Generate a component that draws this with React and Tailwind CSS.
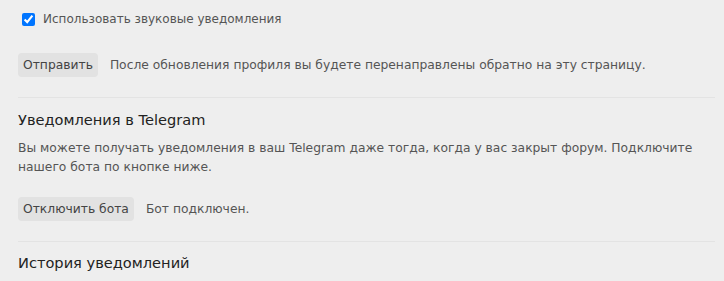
export default function App() {
  return (
    <div className="min-h-[281px] bg-[#eeeeee] pl-[18px] pr-[9px] pt-[9px] font-['DejaVu_Sans',sans-serif] text-[12.3px] text-[#555]">
      <label className="flex h-[20px] items-center text-[12px]">
        <input type="checkbox" defaultChecked className="ml-[4px] mr-[8px] h-[13px] w-[13px] accent-[#0075ff]" />
        <span>Использовать звуковые уведомления</span>
      </label>

      <div className="mt-[24px] flex items-center gap-[12px]">
        <button className="h-[24px] rounded-[4px] bg-[#e2e2e2] px-[5px] text-[#444]">Отправить</button>
        <span>После обновления профиля вы будете перенаправлены обратно на эту страницу.</span>
      </div>

      <hr className="mt-[20px] border-[#e3e3e3]" />

      <h3 className="mt-[12px] text-[14.6px] leading-[20px] text-[#222]">Уведомления в Telegram</h3>
      <p className="mt-[9px] leading-[19px]">
        Вы можете получать уведомления в ваш Telegram даже тогда, когда у вас закрыт форум. Подключите нашего бота по кнопке ниже.
      </p>

      <div className="mt-[20px] flex items-center gap-[12px]">
        <button className="h-[24px] rounded-[4px] bg-[#e2e2e2] px-[5px] text-[#444]">Отключить бота</button>
        <span>Бот подключен.</span>
      </div>

      <hr className="mt-[20px] border-[#e3e3e3]" />

      <h3 className="mt-[11px] text-[14.6px] leading-[20px] text-[#222]">История уведомлений</h3>
    </div>
  )
}
